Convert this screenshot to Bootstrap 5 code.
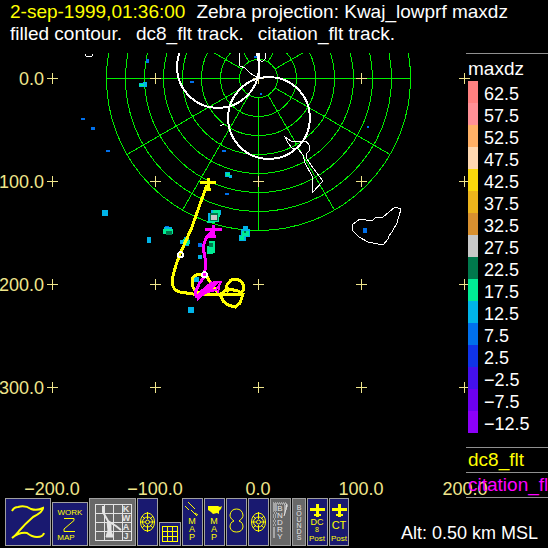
<!DOCTYPE html>
<html lang="en">
<head>
<meta charset="utf-8">
<meta name="viewport" content="width=device-width, initial-scale=1">
<title>Zebra projection</title>
<link href="https://cdn.jsdelivr.net/npm/bootstrap@5.3.0/dist/css/bootstrap.min.css" rel="stylesheet">
<style>
  body { background: #000; color: #fff; font-family: "Liberation Sans", Arial, sans-serif; font-size: 19px; line-height: 22px; }
  .heading { padding: 1px 10px 8px; }
  .heading h1 { font-size: 19px; line-height: 22px; font-weight: 400; }
  .heading time { color: #ff0; }
  .tracks { column-gap: 14px; }
  .titles { column-gap: 11px; }
  .stage { display: grid; overflow: hidden; }
  .stage > * { grid-area: 1 / 1; }
  .plot { width: 100%; height: auto; }
  .plot text { font-size: 18px; fill: #f0e68c; }
  .legend { justify-self: end; width: 82px; font-size: 18px; line-height: 22px; white-space: nowrap; overflow: hidden; }
  .legend h2 { font-size: 19px; line-height: 23px; font-weight: 400; padding: 3px 2px 1px; }
  .legend section { border-top: 1px solid #909090; }
  .scale { padding: 0 2px 14px; }
  .scale li { gap: 6px; height: 22px; }
  .scale span { width: 10px; height: 22px; }
  .scale b { font-weight: 400; padding-top: 2px; }
  .trackname { font-size: 19px; line-height: 24px; padding-left: 2px; }
  .dc8 { color: #ff0; }
  .citation { color: #f0f; }
  .last { border-bottom: 1px solid #909090; }
  .tools { gap: 1px; padding: 0 10px 2px 5px; }
  .tool { background: #191970; border: 1px solid #a0a0a0; padding: 0; height: 48px; width: 21px; color: #ff0; flex: none; }
  .tool svg { display: block; width: 100%; height: 100%; fill: none; stroke: #ff0; }
  .tool text { fill: #ff0; stroke: none; font-family: "Liberation Sans", Arial, sans-serif; text-anchor: middle; }
  .tool.gray { background: #686868; }
  .tool.gray svg { stroke: #e4e4e4; }
  .tool.gray text { fill: #e4e4e4; }
  .w46 { width: 46px; } .w36 { width: 36px; height: 44px; } .w47 { width: 47px; }
  .w22 { width: 22px; height: 24px; } .w14 { width: 14px; } .w20 { width: 20px; }
  .altitude { font-size: 18px; padding-bottom: 2px; }
  .c1{background:#ff8080}.c2{background:#ff9096}.c3{background:#ffb066}.c4{background:#ffd8b0}
  .c5{background:#f8d80c}.c6{background:#ecb41c}.c7{background:#d89030}.c8{background:#c8c8c8}
  .c9{background:#00784c}.c10{background:#00ec94}.c11{background:#00b4e8}.c12{background:#0070ec}
  .c13{background:#1034e8}.c14{background:#4410ec}.c15{background:#6c00f0}.c16{background:#8c00f8}
</style>
</head>
<body class="min-vh-100 d-flex flex-column">
<header class="heading">
  <h1 class="m-0 d-flex flex-wrap titles"><time datetime="1999-09-02T01:36:00">2-sep-1999,01:36:00</time><span>Zebra projection: Kwaj_lowprf maxdz</span></h1>
  <div class="d-flex flex-wrap tracks"><span>filled contour.</span><span>dc8_flt track.</span><span>citation_flt track.</span></div>
</header>

<main class="stage">
  <svg class="plot" viewBox="0 53 548 445" role="img" aria-label="Radar plot with flight tracks">
    <g shape-rendering="crispEdges">
    <!-- range rings and spokes -->
    <g fill="none" stroke="#00f000" stroke-width="1">
      <circle cx="258.500" cy="78.500" r="19"/><circle cx="258.500" cy="78.500" r="38"/><circle cx="258.500" cy="78.500" r="57"/><circle cx="258.500" cy="78.500" r="76"/>
      <circle cx="258.500" cy="78.500" r="95"/><circle cx="258.500" cy="78.500" r="114"/><circle cx="258.500" cy="78.500" r="133"/><circle cx="258.500" cy="78.500" r="152"/>
      <g transform="translate(258.500 78.500)">
        <path d="M19 0H152M-19 0H-152M0 19V152M0 -19V-152"/>
        <path d="M16.500 9.500L131.600 76M9.500 16.500L76 131.600M-16.500 9.500L-131.600 76M-9.500 16.500L-76 131.600M16.500 -9.500L131.600 -76M-16.500 -9.500L-131.600 -76M9.500 -16.500L76 -131.600M-9.500 -16.500L-76 -131.600"/>
      </g>
    </g>
    <!-- grid crosses -->
    <path fill="none" stroke="#f0e68c" d="M47 78.500h11M52.500 73v11M150 78.500h11M155.500 73v11M253 78.500h11M258.500 73v11M356 78.500h11M361.500 73v11M459 78.500h11M464.500 73v11
      M47 181.500h11M52.500 176v11M150 181.500h11M155.500 176v11M253 181.500h11M258.500 176v11M356 181.500h11M361.500 176v11M459 181.500h11M464.500 176v11
      M47 284.500h11M52.500 279v11M150 284.500h11M155.500 279v11M253 284.500h11M258.500 279v11M356 284.500h11M361.500 279v11M459 284.500h11M464.500 279v11
      M47 387.500h11M52.500 382v11M150 387.500h11M155.500 382v11M253 387.500h11M258.500 382v11M356 387.500h11M361.500 382v11M459 387.500h11M464.500 382v11"/>
    <!-- echoes -->
    <path fill="#0070ec" d="M81 118h4v2h-4zM91 127h4v3h-4zM106 150h4v2h-4zM146 59h3v4h-3zM190 81h4v2h-4zM222 150h4v2h-4zM367 126h2v2h-2zM363 228h4v5h-4zM198 243h4v4h-4zM254 56h3v2h-3zM260 93h2v2h-2zM225 193h4v2h-4zM165 226h4v3h-4z"/>
    <path fill="#00b4e8" d="M102 210h6v6h-6zM147 237h4v6h-4zM188 307h6v6h-6zM198 255h4v4h-4zM194 277h5v5h-5zM139 83h8v4h-8zM164 227h8v3h-8zM180 240h10v4h-10zM184 237h5v9h-5zM243 226h5v3h-5zM241 229h9v8h-9zM239 235h7v6h-7zM208 213h10v8h-10zM211 210h10v5h-10zM225 172h5v5h-5zM229 175h3v3h-3zM143 82h4v2h-4z"/>
    <path fill="#00ec94" d="M139 84h5v2h-5zM163 229h10v5h-10zM183 239h6v6h-6zM209 241h6v12h-6zM207 246h6v8h-6zM213 210h7v7h-7zM210 213h9v9h-9zM207 221h8v2h-8zM242 231h7v5h-7zM240 236h4v4h-4zM226 173h4v3h-4z"/>
    <path fill="#00784c" d="M166 231h6v4h-6zM209 243h4v4h-4zM210 213h8v8h-8zM244 231h2v2h-2z"/>
    <path fill="#c8c8c8" d="M211 215h6v5h-6z"/>
    <!-- coastlines -->
    <g fill="none" stroke="#fff">
      <path d="M85 54l1 2h6l1-2M239 53l1 13 5 2 5 5 8 5M265 53l1 5-4 4-2-2M220 125h2M222 124h2"/>
      <path d="M285 137l6 4 8 1 7-1 3 4v6l-3 3 1 5 6 9 10 13-11 12v-17l-7-13-2-8-5-6-6-1-4-5z"/>
      <path d="M352 225l8-6 12 2 4-4 4 1 3-1 12-10 6 2-4 14-5 9-3 4-1 3-5 6-15-3-9-5-7-7z"/>
      <g stroke-width="2"><circle cx="218" cy="67" r="41"/><circle cx="269" cy="118" r="41"/><path d="M259 53V78"/></g>
    </g>
    <!-- DC-8 track -->
    <g fill="none" stroke="#ff0" stroke-width="3">
      <path d="M207 185L199 207 192 227 180 254 176 265 173 276 172 284 175 290 180 292 193 294H242"/>
      <path d="M208 178v12M200 182.500h16M204 189h7"/>
      <path d="M206 275L199 274 194 276 192 279V285L195 291 202 294M206 275L210 282 214 287 218 293M221 294L226 290 227 285 231 280 236 279 241 281 244 286 243 291 238 294M220 294L223 301 228 305 235 307 240 303 243 294 238 291 229 289 226 292"/>
    </g>
    <!-- Citation track -->
    <g fill="none" stroke="#f0f" stroke-width="3">
      <path d="M213 231L206 238 203 247 205 258 205 270 204 277 199 284 195 293 197 298"/>
      <path d="M205 229.500h17M213.500 225v10M209 236h7"/>
      <path stroke-width="5" d="M198 297L204 292 210 290 213 282"/>
      <path stroke-width="2" d="M197 300L206 292 216 290 221 282H214L202 294 195 296M200 292L212 282M220 281L218 293M208 293L217 283"/>
    </g>
    <g fill="none" stroke="#fff" stroke-width="2"><circle cx="180.500" cy="254.500" r="2.500"/><circle cx="204.500" cy="274.500" r="2.500"/></g>
    </g>
    <g text-anchor="end"><text x="44" y="85">0.0</text><text x="44" y="188">100.0</text><text x="44" y="291">200.0</text><text x="44" y="394">300.0</text></g>
    <g text-anchor="middle"><text x="52" y="495">−200.0</text><text x="155" y="495">−100.0</text><text x="258" y="495">0.0</text><text x="361" y="495">100.0</text><text x="465" y="495">200.0</text></g>
  </svg>

  <aside class="legend">
    <section>
      <h2 class="m-0">maxdz</h2>
      <ul class="scale list-unstyled m-0">
        <li class="d-flex"><span class="c1"></span><b>62.5</b></li>
        <li class="d-flex"><span class="c2"></span><b>57.5</b></li>
        <li class="d-flex"><span class="c3"></span><b>52.5</b></li>
        <li class="d-flex"><span class="c4"></span><b>47.5</b></li>
        <li class="d-flex"><span class="c5"></span><b>42.5</b></li>
        <li class="d-flex"><span class="c6"></span><b>37.5</b></li>
        <li class="d-flex"><span class="c7"></span><b>32.5</b></li>
        <li class="d-flex"><span class="c8"></span><b>27.5</b></li>
        <li class="d-flex"><span class="c9"></span><b>22.5</b></li>
        <li class="d-flex"><span class="c10"></span><b>17.5</b></li>
        <li class="d-flex"><span class="c11"></span><b>12.5</b></li>
        <li class="d-flex"><span class="c12"></span><b>7.5</b></li>
        <li class="d-flex"><span class="c13"></span><b>2.5</b></li>
        <li class="d-flex"><span class="c14"></span><b>−2.5</b></li>
        <li class="d-flex"><span class="c15"></span><b>−7.5</b></li>
        <li class="d-flex"><span class="c16"></span><b>−12.5</b></li>
      </ul>
    </section>
    <section class="trackname dc8">dc8_flt</section>
    <section class="trackname citation last">citation_flt</section>
  </aside>
</main>

<footer class="tools d-flex align-items-end">
  <button type="button" class="tool w46" aria-label="Zebra"><svg viewBox="0 0 44 46"><path stroke-width="2" d="M6 12Q8 8 12 8Q19 6 25 10Q31 12 37 9Q37 13 27 18Q19 25 13 32Q9 37 6 39Q13 33 21 34Q26 38 31 38Q37 38 38 34"/></svg></button>
  <button type="button" class="tool w36"><svg viewBox="0 0 34 42"><text x="17" y="12" font-size="8">WORK</text><path d="M11 15.500h10v2L11 26v2.500h11"/><text x="13" y="37" font-size="8">MAP</text></svg></button>
  <button type="button" class="tool w47 gray"><svg viewBox="0 0 45 46"><path shape-rendering="crispEdges" d="M5 5H41V41H5ZM14 5V41M23 5V41M32 5V41M5 14H41M5 23H41M5 32H41"/><path stroke-width="2" d="M13 7V13L18 22 26 27 31 31M18 22L19 28"/><path fill="#e4e4e4" d="M17 23L21 25 21 31 23 38H16L18 31Z"/><g font-size="9" font-weight="700"><text x="36" y="13">K</text><text x="36" y="22">W</text><text x="36" y="31">A</text><text x="36" y="40">J</text></g></svg></button>
  <button type="button" class="tool" aria-label="Rings"><svg viewBox="0 0 19 46"><g id="rings"><ellipse cx="9.500" cy="23" rx="7" ry="9"/><circle cx="9.500" cy="23" r="5"/><circle cx="9.500" cy="23" r="2"/><path d="M2 23h5M12 23h5M9.500 13v7M9.500 26v7M4 17l3 3M12 26l3 3M15 17l-3 3M7 26l-3 3"/></g></svg></button>
  <button type="button" class="tool w22" aria-label="Grid"><svg viewBox="0 0 20 22"><path shape-rendering="crispEdges" d="M2.500 3.500h15v15h-15zM7.500 3.500v15M12.500 3.500v15M2.500 8.500h15M2.500 13.500h15"/></svg></button>
  <button type="button" class="tool"><svg viewBox="0 0 19 46"><path d="M2 7l4 4M5 3l7 7M8 11l6 6M12 14l3 2"/><g font-size="9"><text x="9" y="25">M</text><text x="9" y="33">A</text><text x="9" y="41">P</text></g></svg></button>
  <button type="button" class="tool"><svg viewBox="0 0 19 46"><path fill="#ff0" stroke="none" d="M3 7h10l2 1 2-1-1 3-2 2v3l-2-1-4 1-2-2-3-2z"/><g font-size="9"><text x="9" y="25">M</text><text x="9" y="33">A</text><text x="9" y="41">P</text></g></svg></button>
  <button type="button" class="tool" aria-label="Range"><svg viewBox="0 0 19 46"><path d="M7 22C4 20 3 18 3 16Q4 10 9.500 10Q15 10 16 16C16 18 15 20 12 22C15 23 16 25 16 28Q15 33 9.500 33Q4 33 3 28C3 25 4 23 7 22"/></svg></button>
  <button type="button" class="tool" aria-label="Range rings"><svg viewBox="0 0 19 46"><use href="#rings"/></svg></button>
  <button type="button" class="tool gray"><svg viewBox="0 0 19 46"><path stroke-dasharray="1 1" d="M2 4H16M3 5H16M2 6H6M3 7H6M2 8H6M3 9H6M2 10H6M3 11H6M2 12H6M3 14H6M2 16H6M2 18H5M3 20H5M2 22H5M3 24H5M2 26H5M13 6H17M14 7H17M13 8H16M14 9H16M13 10H16M13 12H15M13 14H15"/><path d="M3 28v11M16 5l-2 9-1 3"/><g font-size="8"><text x="9" y="12">B</text><text x="9" y="19">N</text><text x="9" y="26">D</text><text x="9" y="33">R</text><text x="9" y="40">Y</text></g></svg></button>
  <button type="button" class="tool w14 gray"><svg viewBox="0 0 12 46"><g font-size="7"><text x="6" y="11">B</text><text x="6" y="17">O</text><text x="6" y="23">U</text><text x="6" y="29">N</text><text x="6" y="35">D</text><text x="6" y="41">S</text></g></svg></button>
  <button type="button" class="tool"><svg viewBox="0 0 19 46"><path id="plane" fill="#ff0" stroke="none" d="M8 5h3v4h6v3h-6v3h2v2h-2v1h-3v-1h-2v-2h2v-3h-6v-3h6z"/><text x="9" y="26" font-size="9">DC</text><text x="9" y="33" font-size="7">8</text><text x="9" y="42" font-size="8">Post</text></svg></button>
  <button type="button" class="tool w20"><svg viewBox="0 0 18 46"><use href="#plane"/><text x="9" y="30" font-size="11">CT</text><text x="9" y="42" font-size="8">Post</text></svg></button>
  <div class="altitude ms-auto text-nowrap">Alt: 0.50 km MSL</div>
</footer>
<script src="https://cdn.jsdelivr.net/npm/bootstrap@5.3.0/dist/js/bootstrap.bundle.min.js"></script>
</body>
</html>
